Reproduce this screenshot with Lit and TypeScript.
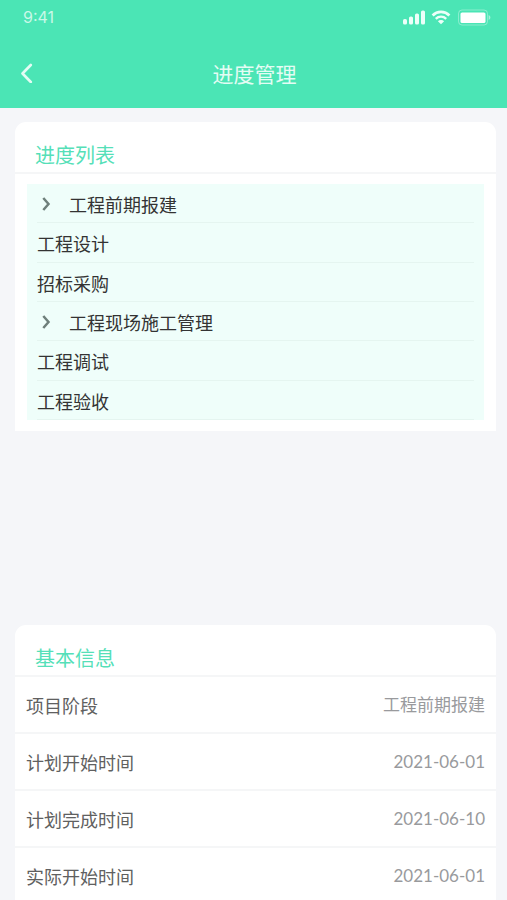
import { LitElement, html, css, svg } from "lit";
import { customElement, state } from "lit/decorators.js";

interface Stage {
  name: string;
  expandable?: boolean;
}

interface Field {
  label: string;
  value: string;
}

const STAGES: Stage[] = [
  { name: "工程前期报建", expandable: true },
  { name: "工程设计" },
  { name: "招标采购" },
  { name: "工程现场施工管理", expandable: true },
  { name: "工程调试" },
  { name: "工程验收" },
];

const FIELDS: Field[] = [
  { label: "项目阶段", value: "工程前期报建" },
  { label: "计划开始时间", value: "2021-06-01" },
  { label: "计划完成时间", value: "2021-06-10" },
  { label: "实际开始时间", value: "2021-06-01" },
];

const SIGNAL_BARS = [
  { x: 0, h: 5.5 },
  { x: 6, h: 8 },
  { x: 12, h: 11 },
  { x: 18, h: 14 },
];

@customElement("status-bar")
export class StatusBar extends LitElement {
  static styles = css`
    :host {
      display: flex;
      align-items: center;
      justify-content: space-between;
      height: 34px;
      padding: 0 16px 0 23px;
      color: #c9f8e8;
      font: 16px/20px Inter, "Liberation Sans", sans-serif;
    }
    .icons {
      display: flex;
      align-items: center;
      gap: 6px;
    }
    svg {
      display: block;
    }
  `;

  render() {
    return html`
      <span>9:41</span>
      <div class="icons">
        <svg width="22" height="15" viewBox="0 0 22 15" fill="#ecfff9" aria-hidden="true">
          ${SIGNAL_BARS.map(
            (b) => svg`<rect x=${b.x} y=${14.5 - b.h} width="4" height=${b.h} rx="1.6" />`
          )}
        </svg>
        <svg width="20" height="15" viewBox="0 0 20 15" fill="none" stroke="#ecfff9" aria-hidden="true">
          <path d="M1.6 5.4a12 12 0 0 1 16.8 0" stroke-width="2.8" />
          <path d="M4.8 8.8a7.4 7.4 0 0 1 10.4 0" stroke-width="2.4" />
          <path d="M10 14.2 6.9 11.2a4.4 4.4 0 0 1 6.2 0z" fill="#ecfff9" stroke="none" />
        </svg>
        <svg width="34" height="17" viewBox="0 0 34 17" aria-hidden="true">
          <rect x="1.5" y="1" width="29" height="15" rx="3.5" fill="none" stroke="#fff" stroke-opacity=".35" />
          <rect x="3.5" y="3.5" width="25" height="10.500" rx="1.6" fill="#fff" />
          <path d="M31.6 6v5c1.1-.5 1.8-1.400 1.800-2.500s-.7-2-1.800-2.500z" fill="#fff" fill-opacity=".5" />
        </svg>
      </div>
    `;
  }
}

@customElement("app-root")
export class AppRoot extends LitElement {
  static styles = css`
    :host {
      display: block;
      box-sizing: border-box;
      height: 100vh;
      overflow: hidden;
      background: #f5f6f9;
      color: #333;
      font: 18px/26px "Noto Sans CJK SC", sans-serif;
    }
    button {
      border: 0;
      background: none;
      padding: 0;
      color: inherit;
      font: inherit;
      cursor: pointer;
    }
    svg {
      display: block;
    }
    .top {
      height: 108px;
      background: #4be5b5;
      color: #e4fcf4;
    }
    .nav {
      display: grid;
      grid-template-columns: 48px 1fr 46px;
      align-items: center;
      height: 77px;
    }
    .back {
      display: flex;
      align-items: center;
      height: 48px;
      padding-left: 20px;
    }
    h1,
    h2 {
      margin: 0;
      font-weight: 400;
    }
    h1 {
      font-size: 21px;
      line-height: 30px;
      text-align: center;
    }
    main {
      display: grid;
      gap: 194px;
      padding: 14px 11px 0 15px;
    }
    .card {
      background: #fff;
      border-radius: 11px 11px 0 0;
    }
    h2 {
      padding: 19px 20px 3px;
      border-bottom: 2px solid #f5f6f7;
      color: #55dfb8;
      font-size: 20px;
      line-height: 28px;
    }
    .stages {
      display: grid;
      grid-auto-rows: 1fr;
      min-height: 236px;
      margin: 0;
      padding: 10px 12px 11px;
      list-style: none;
    }
    .stage {
      display: flex;
      padding: 0 10px;
      background: #effefa;
    }
    .line {
      display: flex;
      flex: 1;
      align-items: center;
      padding-top: 2px;
      border-bottom: 1px solid #e5f5f0;
      text-align: left;
    }
    .chevron {
      width: 32px;
      padding-left: 4px;
      box-sizing: border-box;
      color: #6f807b;
    }
    dl {
      margin: 0;
    }
    .field {
      display: flex;
      align-items: center;
      justify-content: space-between;
      height: 55px;
      padding: 0 11px;
      border-bottom: 2px solid #f5f6f7;
    }
    dt {
      color: #606060;
    }
    dd {
      margin: 0;
      color: #999a9d;
      font-family: Lato, "Noto Sans CJK SC", sans-serif;
      font-size: 17px;
    }
  `;

  @state() private selected = -1;

  private renderStage(stage: Stage, index: number) {
    return html`
      <li class="stage">
        ${stage.expandable
          ? html`<button
              class="line"
              aria-expanded=${this.selected === index}
              @click=${() => (this.selected = this.selected === index ? -1 : index)}
            >
              <span class="chevron">
                <svg width="11" height="16" viewBox="0 0 11 16" fill="none" stroke="currentColor" stroke-width="2.5" aria-hidden="true">
                  <path d="M2.300 2l5.200 6-5.200 6" />
                </svg>
              </span>
              ${stage.name}
            </button>`
          : html`<span class="line">${stage.name}</span>`}
      </li>
    `;
  }

  render() {
    return html`
      <header class="top">
        <status-bar></status-bar>
        <div class="nav">
          <button class="back" aria-label="返回">
            <svg width="14" height="20" viewBox="0 0 14 20" fill="none" stroke="currentColor" stroke-width="2.600" stroke-linecap="round" stroke-linejoin="round" aria-hidden="true">
              <path d="M10.800 2 2.500 10.500 10.800 19" />
            </svg>
          </button>
          <h1>进度管理</h1>
        </div>
      </header>
      <main>
        <section class="card">
          <h2>进度列表</h2>
          <ul class="stages">
            ${STAGES.map((s, i) => this.renderStage(s, i))}
          </ul>
        </section>
        <section class="card">
          <h2>基本信息</h2>
          <dl>
            ${FIELDS.map(
              (f) => html`<div class="field"><dt>${f.label}</dt><dd>${f.value}</dd></div>`
            )}
          </dl>
        </section>
      </main>
    `;
  }
}
